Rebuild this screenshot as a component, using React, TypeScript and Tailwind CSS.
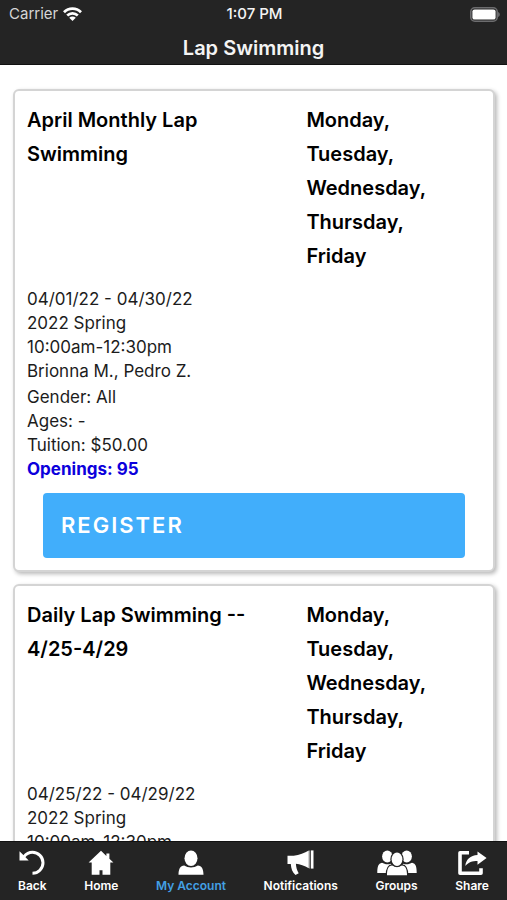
import type { ReactNode } from "react";
import clsx from "clsx";

type SwimClass = {
  name: string;
  dates: string;
  session: string;
  time: string;
  instructors: string;
  tuition: string;
  openings: number;
};

const DAYS = ["Monday,", "Tuesday,", "Wednesday,", "Thursday,", "Friday"];

const CLASSES: SwimClass[] = [
  {
    name: "April Monthly Lap Swimming",
    dates: "04/01/22 - 04/30/22",
    session: "2022 Spring",
    time: "10:00am-12:30pm",
    instructors: "Brionna M., Pedro Z.",
    tuition: "$50.00",
    openings: 95,
  },
  {
    name: "Daily Lap Swimming -- 4/25-4/29",
    dates: "04/25/22 - 04/29/22",
    session: "2022 Spring",
    time: "10:00am-12:30pm",
    instructors: "Brionna M., Pedro Z.",
    tuition: "$50.00",
    openings: 95,
  },
];

function WifiIcon() {
  return (
    <svg className="h-[14px] w-[19px]" viewBox="0 0 19 14" fill="none" stroke="#fff" strokeWidth="2.7">
      <path d="M1 5.200C5.700.3 13.300.3 18 5.200" />
      <path d="M4.200 8.500c3-2.900 7.600-2.900 10.600 0" />
      <path d="M9.500 14 6.200 10.700c1.900-1.700 4.700-1.700 6.600 0z" fill="#fff" stroke="none" />
    </svg>
  );
}

function BatteryIcon() {
  return (
    <svg className="h-[15px] w-[30px]" viewBox="0 0 30 15">
      <rect x=".8" y=".8" width="26.400" height="13.400" rx="4" fill="none" stroke="#6c6c6e" strokeWidth="1.600" />
      <rect x="2.400" y="2.400" width="23.200" height="10.200" rx="2.200" fill="#fff" />
      <path d="M28.200 5c2 .7 2 4.300 0 5z" fill="#77777a" />
    </svg>
  );
}

function BackIcon() {
  return (
    <svg className="h-[26px] w-[26px]" viewBox="0 0 26 26">
      <path d="M5 6.600C7.500 3.500 10.500 2.300 13.500 2.300a10.500 10.500 0 0 1 0 21" fill="none" stroke="#fff" strokeWidth="3" />
      <path d="M.5 1.200v9.400h9.200L7 7.700 3.300 4z" fill="#fff" />
    </svg>
  );
}

function HomeIcon() {
  return (
    <svg className="h-[26px] w-[26px]" viewBox="0 0 26 26" fill="currentColor">
      <path d="M13 .8.600 12.600h3.100v12.200h7.800v-4.600h3v4.600h7.800V12.600h3.100l-4-3.800V3.600h-3v2.400z" />
    </svg>
  );
}

function AccountIcon() {
  return (
    <svg className="h-[26px] w-[26px]" viewBox="0 0 26 26" fill="#fff">
      <ellipse cx="13" cy="8.300" rx="6.500" ry="7.700" />
      <path d="M.5 24.800c0-5.600 1.700-9.100 5.700-9.300 3.900 2.500 9.700 2.500 13.600 0 4 .2 5.700 3.700 5.700 9.300z" />
    </svg>
  );
}

function MegaphoneIcon() {
  return (
    <svg className="h-[26px] w-[27px]" viewBox="0 0 27 26" fill="currentColor">
      <path d="M.5 5.800h6.200C12.500 5 17.500 3 21.800.5v17.800C17.600 15.800 13 14.200 8.900 13.800c.2 3.400 1 6.500 2.800 9.400L8.500 25C5.300 22.200 4.100 18.500 3.800 14H.5z" />
      <path d="M23.800.4h2.700v18.200h-2.700z" />
      <path d="M22.500.4h.5v18.200h-.5z" />
    </svg>
  );
}

function GroupsIcon() {
  return (
    <svg className="h-[26px] w-[40px]" viewBox="0 0 40 26" fill="#fff">
      <ellipse cx="10.300" cy="6.500" rx="5.200" ry="5.900" />
      <ellipse cx="29.700" cy="6.500" rx="5.200" ry="5.900" />
      <path d="M.3 22.900c0-5.900.8-9.400 4.700-10.100 2.200 1.400 5.600 2 9 1l3 9.100zM39.700 22.900c0-5.900-.8-9.400-4.700-10.100-2.200 1.400-5.600 2-9 1l-3 9.100z" />
      <g stroke="#242424" strokeWidth="2.600" paintOrder="stroke">
        <path d="M10 25.200c0-6 1.300-9.400 5.200-9.700 2.800 1.700 6.800 1.700 9.600 0 3.900.3 5.200 3.700 5.200 9.700z" />
        <ellipse cx="20" cy="9.300" rx="5.400" ry="6.700" />
      </g>
    </svg>
  );
}

function ShareIcon() {
  return (
    <svg className="h-[26px] w-[30px]" viewBox="0 0 30 26">
      <path d="M12 2.700H3V23.300h21v-5.100" fill="none" stroke="#fff" strokeWidth="3.600" strokeLinejoin="round" />
      <path d="M20.500 1.500 29.600 8l-9.100 6.700v-3.700c-5.300 0-9.100 1.300-12.200 5.100.5-6.700 5.100-10.800 12.200-11.200z" fill="#fff" />
    </svg>
  );
}

function ClassCard({ item }: { item: SwimClass }) {
  return (
    <article className="rounded-md border-2 border-[#d4d4d4] bg-white px-3 pt-3 pb-3 shadow-[2px_2px_4px_#b8b8b8]">
      <div className="grid grid-cols-[8fr_5fr] text-xl leading-[34px] font-semibold text-black">
        <h2 className="pr-6">{item.name}</h2>
        <ul>
          {DAYS.map((day) => (
            <li key={day}>{day}</li>
          ))}
        </ul>
      </div>
      <div className="mt-[14px] flex flex-col gap-[2px] text-[17px] leading-6 text-[#1c1c1c]">
        <div>
          <p>{item.dates}</p>
          <p>{item.session}</p>
          <p>{item.time}</p>
          <p>{item.instructors}</p>
        </div>
        <div>
          <p>Gender: All</p>
          <p>Ages: -</p>
          <p>Tuition: {item.tuition}</p>
          <p className="font-bold text-[#0c00dc]">Openings: {item.openings}</p>
        </div>
      </div>
      <div className="mt-3 px-4">
        <button
          type="button"
          className="h-[65px] w-full rounded-sm bg-[#41aefb] px-[18px] text-left text-[22px] font-semibold tracking-[2px] text-white"
        >
          REGISTER
        </button>
      </div>
    </article>
  );
}

function NavItem({ label, active, children }: { label: string; active?: boolean; children: ReactNode }) {
  return (
    <a
      href="#"
      aria-current={active ? "page" : undefined}
      className="flex flex-col items-center gap-[2px] text-white"
    >
      {children}
      <span className={clsx("text-xs leading-4 font-semibold", active && "text-[#43a0e4]")}>{label}</span>
    </a>
  );
}

export default function App() {
  return (
    <div className="flex h-screen flex-col bg-white font-['Inter',sans-serif]">
      <header className="shrink-0 border-b border-[#111] bg-[#242424] text-[#f4f4f4]">
        <div className="grid h-7 grid-cols-3 items-center pr-[7px] pl-[9px] text-[15px]">
          <div className="flex items-center gap-[5px] text-[#d6d6d6]">
            Carrier
            <WifiIcon />
          </div>
          <div className="text-center font-medium">1:07 PM</div>
          <div className="flex justify-end">
            <BatteryIcon />
          </div>
        </div>
        <h1 className="h-9 text-center text-xl leading-10 font-semibold">Lap Swimming</h1>
      </header>

      <main className="min-h-0 flex-1 overflow-y-auto pt-6 pr-3 pl-[13px] [scrollbar-width:none]">
        <div className="flex flex-col gap-3">
          {CLASSES.map((item) => (
            <ClassCard key={item.name} item={item} />
          ))}
        </div>
      </main>

      <nav className="flex shrink-0 items-center justify-between border-t border-[#111] bg-[#242424] px-[18px] pt-2 pb-[6px]">
        <NavItem label="Back">
          <BackIcon />
        </NavItem>
        <NavItem label="Home">
          <HomeIcon />
        </NavItem>
        <NavItem label="My Account" active>
          <AccountIcon />
        </NavItem>
        <NavItem label="Notifications">
          <MegaphoneIcon />
        </NavItem>
        <NavItem label="Groups">
          <GroupsIcon />
        </NavItem>
        <NavItem label="Share">
          <ShareIcon />
        </NavItem>
      </nav>
    </div>
  );
}
